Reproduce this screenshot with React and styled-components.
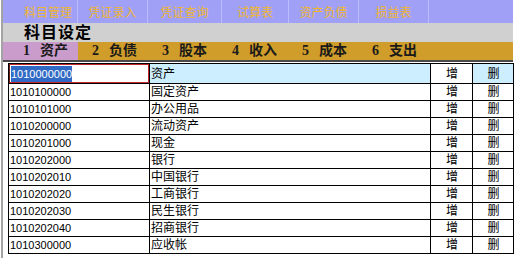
import React from "react";
import styled, { createGlobalStyle } from "styled-components";

const GlobalStyle = createGlobalStyle`
  html, body {
    margin: 0;
    padding: 0;
    background: #fff;
  }
  body {
    font-family: "Liberation Sans", "Noto Sans CJK SC", sans-serif;
  }
`;

const Frame = styled.div`
  margin-left: 1px;
  width: 510px;
  min-height: 100vh;
  border-left: 2px solid #a3a3a3;
  background: #fff;
`;

const MenuBar = styled.div`
  display: flex;
  height: 23px;
  background: #a0a0f7;
`;

const MenuItem = styled.div`
  width: ${(p) => p.$width}px;
  padding-left: ${(p) => p.$indent || 0}px;
  box-sizing: border-box;
  border-right: 1px solid #bcbcff;
  display: flex;
  align-items: center;
  justify-content: center;
  font-family: "Liberation Sans", "Noto Sans CJK SC", sans-serif;
  font-size: 12px;
  color: #efb52f;
`;

const TitleRow = styled.div`
  height: 19px;
  background: #d0d0d0;
  padding-left: 21px;
  display: flex;
  align-items: center;
  font-family: "Liberation Sans", "Noto Sans CJK SC", sans-serif;
  font-weight: bold;
  font-size: 16px;
  letter-spacing: 1px;
  line-height: 16px;
  color: #000;
`;

const TabBar = styled.div`
  display: flex;
  height: 18px;
  background: #d09c2a;
  border-bottom: 2px solid #4a4a4a;
`;

const Tab = styled.div`
  width: ${(p) => p.$width}px;
  padding-left: ${(p) => p.$indent}px;
  box-sizing: border-box;
  background: ${(p) => (p.$active ? "#c99ccb" : "transparent")};
  display: flex;
  align-items: center;
  font-family: "Liberation Serif", "Noto Sans CJK SC", serif;
  font-weight: bold;
  font-size: 14px;
  line-height: 16px;
  color: #1a1a1a;
`;

const TabNum = styled.span`
  margin-right: 10px;
`;

const Table = styled.table`
  margin: 1px 0 0 5px;
  width: 505px;
  border-collapse: collapse;
  table-layout: fixed;
`;

const Cell = styled.td`
  height: 16px;
  padding: 0 0 0 1px;
  border: 1px solid #000;
  background: ${(p) => (p.$hl ? "#cdeeff" : "#fff")};
  text-align: ${(p) => (p.$center ? "center" : "left")};
  font-family: "Liberation Sans", "Noto Sans CJK SC", sans-serif;
  font-size: ${(p) => (p.$code ? "11px" : "12px")};
  line-height: 16px;
  color: #000;
  white-space: nowrap;
  overflow: hidden;
`;

const InputCell = styled.td`
  padding: 0;
  border: 1px solid #000;
`;

const CodeInput = styled.div`
  height: 17px;
  border: 1px solid #c4262e;
  border-left-color: #6a1a1a;
  display: flex;
  align-items: center;
  padding-left: 1px;
  font-family: "Liberation Sans", sans-serif;
  font-size: 11px;
  background: #fff;
`;

const Selected = styled.span`
  background: #316ac5;
  color: #fff;
  line-height: 16px;
`;

const menus = [
  { label: "科目管理", width: 75, indent: 16 },
  { label: "凭证录入", width: 70 },
  { label: "凭证查询", width: 74 },
  { label: "试算表", width: 67 },
  { label: "资产负债", width: 70 },
  { label: "损益表", width: 70 },
];

const tabs = [
  { num: "1", label: "资产", width: 75, indent: 20 },
  { num: "2", label: "负债", width: 70, indent: 14 },
  { num: "3", label: "股本", width: 70, indent: 14 },
  { num: "4", label: "收入", width: 70, indent: 14 },
  { num: "5", label: "成本", width: 70, indent: 14 },
  { num: "6", label: "支出", width: 70, indent: 14 },
];

const accounts = [
  ["1010000000", "资产"],
  ["1010100000", "固定资产"],
  ["1010101000", "办公用品"],
  ["1010200000", "流动资产"],
  ["1010201000", "现金"],
  ["1010202000", "银行"],
  ["1010202010", "中国银行"],
  ["1010202020", "工商银行"],
  ["1010202030", "民生银行"],
  ["1010202040", "招商银行"],
  ["1010300000", "应收帐"],
];

export default function App() {
  return (
    <>
      <GlobalStyle />
      <Frame>
        <MenuBar>
          {menus.map((m) => (
            <MenuItem key={m.label} $width={m.width} $indent={m.indent}>
              {m.label}
            </MenuItem>
          ))}
        </MenuBar>
        <TitleRow>科目设定</TitleRow>
        <TabBar>
          {tabs.map((t, i) => (
            <Tab key={t.num} $width={t.width} $indent={t.indent} $active={i === 0}>
              <TabNum>{t.num}</TabNum>
              {t.label}
            </Tab>
          ))}
        </TabBar>
        <Table>
          <colgroup>
            <col style={{ width: 141 }} />
            <col style={{ width: 281 }} />
            <col style={{ width: 42 }} />
            <col style={{ width: 41 }} />
          </colgroup>
          <tbody>
            {accounts.map(([code, name], i) => (
              <tr key={code}>
                {i === 0 ? (
                  <InputCell>
                    <CodeInput>
                      <Selected>{code}</Selected>
                    </CodeInput>
                  </InputCell>
                ) : (
                  <Cell $code>{code}</Cell>
                )}
                <Cell $hl={i === 0}>{name}</Cell>
                <Cell $center>增</Cell>
                <Cell $center $hl={i === 0}>删</Cell>
              </tr>
            ))}
          </tbody>
        </Table>
      </Frame>
    </>
  );
}
